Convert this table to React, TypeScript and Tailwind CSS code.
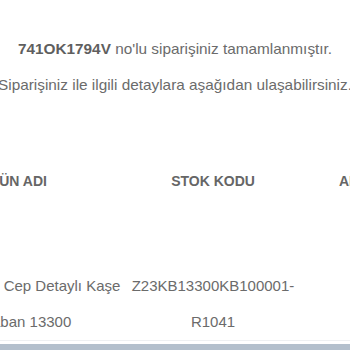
import React from 'react';

// Order confirmation snippet with the product table
const rows = [
  {
    name: 'Ak Cep Detaylı Kaşe Kaban 13300',
    code: 'Z23KB13300KB100001-R1041',
    qty: '1',
  },
];

const App: React.FC = () => {
  return (
    <div className="w-[350px] h-[350px] overflow-hidden bg-white text-[#6b6b6b] font-['Liberation_Sans',Arial,sans-serif]">
      <div className="pt-[39px] flex justify-center whitespace-nowrap text-[15.35px] leading-[20px]">
        <span>
          <b className="font-bold text-[#5f5f5f]">741OK1794V</b> no'lu siparişiniz tamamlanmıştır.
        </span>
      </div>
      <div className="mt-[16px] flex justify-center whitespace-nowrap text-[15.35px] leading-[20px]">
        <span>Siparişiniz ile ilgili detaylara aşağıdan ulaşabilirsiniz.</span>
      </div>

      <div className="mt-[76px] ml-[-18px] w-[450px]">
        <div className="grid grid-cols-[148px_166px_124px] text-[14px] leading-[20px] font-bold text-[#666]">
          <div className="ml-[-3px]">ÜRÜN ADI</div>
          <div className="text-center">STOK KODU</div>
          <div className="text-center">ADET</div>
        </div>
        {rows.map((row) => (
          <div
            key={row.code}
            className="mt-[77px] grid grid-cols-[148px_166px_124px] text-[15px] leading-[36px] border-b border-[#eef0f2]"
          >
            <div>{row.name}</div>
            <div className="text-center">{row.code}</div>
            <div className="text-center">{row.qty}</div>
          </div>
        ))}
      </div>
      <div className="mt-[3px] h-[20px] bg-[#b3bfcc]" />
    </div>
  );
};

export default App;
